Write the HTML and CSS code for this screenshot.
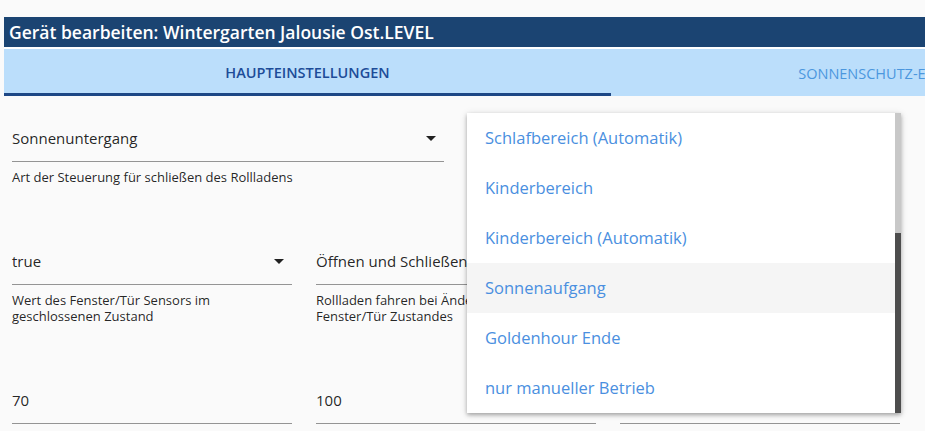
FILE: index.html
```html
<!DOCTYPE html>
<html lang="de">
<head>
    <meta charset="UTF-8">
    <meta name="viewport" content="width=device-width, initial-scale=1.0">
    <title>Gerät bearbeiten</title>
    <link rel="stylesheet" href="styles.css">
</head>
<body>
    <div class="dialog">
        <div class="dialog-title">Gerät bearbeiten: Wintergarten Jalousie Ost.LEVEL</div>

        <div class="tabs">
            <div class="tab active">Haupteinstellungen</div>
            <div class="tab">Sonnenschutz-Einstellungen</div>
        </div>

        <div class="content">
            <div class="row two">
                <div class="field">
                    <div class="control select">Sonnenuntergang</div>
                    <div class="helper">Art der Steuerung für schließen des Rollladens</div>
                </div>
                <div class="field">
                    <div class="control select"></div>
                </div>
            </div>

            <div class="row three">
                <div class="field">
                    <div class="control select">true</div>
                    <div class="helper">Wert des Fenster/Tür Sensors im geschlossenen Zustand</div>
                </div>
                <div class="field">
                    <div class="control select">Öffnen und Schließen</div>
                    <div class="helper">Rollladen fahren bei Änderung des Fenster/Tür Zustandes</div>
                </div>
                <div class="field">
                    <div class="control select"></div>
                </div>
            </div>

            <div class="row three">
                <div class="field">
                    <div class="control">70</div>
                </div>
                <div class="field">
                    <div class="control">100</div>
                </div>
                <div class="field">
                    <div class="control"></div>
                </div>
            </div>
        </div>

        <!-- open dropdown of the second select -->
        <div class="menu">
            <ul class="menu-list">
                <li>Schlafbereich (Automatik)</li>
                <li>Kinderbereich</li>
                <li>Kinderbereich (Automatik)</li>
                <li class="hover">Sonnenaufgang</li>
                <li>Goldenhour Ende</li>
                <li>nur manueller Betrieb</li>
            </ul>
            <div class="scrollbar"><div class="thumb"></div></div>
        </div>
    </div>
</body>
</html>
```

FILE: styles.css
```css
/* Global Styles */
body {
    margin: 0;
    padding: 17px 0 0 4px;
    background: #fafafa;
    font-family: 'Open Sans', 'Liberation Sans', sans-serif;
    color: rgba(0, 0, 0, 0.87);
    overflow: hidden;
}

.dialog {
    position: relative;
}

.dialog-title {
    height: 30px;
    line-height: 30px;
    padding-left: 5px;
    background: #1b4472;
    color: #ffffff;
    font-size: 17.5px;
    font-weight: 600;
    white-space: nowrap;
    border-bottom: 2px solid #ffffff;
}

/* Tabs */
.tabs {
    display: flex;
    height: 47px;
    background: #bbdefb;
    overflow: hidden;
}

.tab {
    flex: 0 0 607px;
    display: flex;
    justify-content: center;
    align-items: center;
    box-sizing: border-box;
    padding-top: 2px;
    font-size: 14.5px;
    text-transform: uppercase;
    color: #4b97de;
    white-space: nowrap;
}

.tab.active {
    color: #1d4c98;
    font-weight: 600;
    border-bottom: 3px solid #1d4785;
    padding-top: 3px;
}

/* Form content */
.content {
    padding: 32px 25px 0 8px;
    display: flex;
    flex-direction: column;
    gap: 66px;
}

.row {
    display: grid;
    column-gap: 24px;
}

.row.two {
    grid-template-columns: 1fr 1fr;
}

.row.three {
    grid-template-columns: 1fr 1fr 1fr;
}

.control {
    position: relative;
    height: 20px;
    line-height: 20px;
    padding-bottom: 13px;
    font-size: 15px;
    border-bottom: 1px solid #949494;
    white-space: nowrap;
}

.select::after {
    content: '';
    position: absolute;
    right: 8px;
    top: 8px;
    border-left: 5px solid transparent;
    border-right: 5px solid transparent;
    border-top: 5px solid rgba(0, 0, 0, 0.87);
}

.helper {
    margin-top: 7px;
    font-size: 13px;
    line-height: 16px;
    padding-right: 40px;
}

/* Dropdown menu */
.menu {
    position: absolute;
    top: 96px;
    left: 463px;
    width: 434px;
    height: 300px;
    display: flex;
    background: #ffffff;
    box-shadow: 0 2px 4px rgba(0, 0, 0, 0.3), 0 1px 8px rgba(0, 0, 0, 0.1);
}

.menu-list {
    flex: 1;
    list-style: none;
    margin: 0;
    padding: 0;
}

.menu-list li {
    height: 50px;
    line-height: 50px;
    padding-left: 18px;
    font-size: 16.5px;
    color: #4a8fe0;
}

.menu-list li.hover {
    background: #f5f5f5;
}

.scrollbar {
    width: 6px;
    background: #c8c8c8;
    display: flex;
    flex-direction: column;
    justify-content: flex-end;
}

.thumb {
    height: 180px;
    background: #4d4d4d;
}
```
